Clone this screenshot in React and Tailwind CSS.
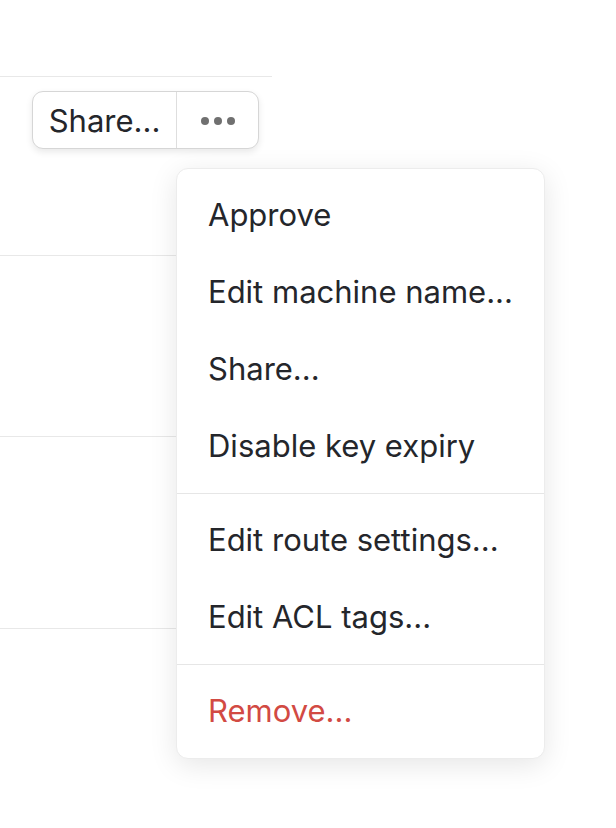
import React from 'react';

const groups = [
  ['Approve', 'Edit machine name...', 'Share...', 'Disable key expiry'],
  ['Edit route settings...', 'Edit ACL tags...'],
  ['Remove...'],
];

const App = () => {
  return (
    <main className="relative w-[616px] h-[828px] bg-white text-[#24262b] font-['Inter','Noto_Sans',sans-serif] overflow-hidden">
      {/* Table rows behind the menu */}
      <div className="w-[272px] pt-[76px]">
        <div className="h-[180px] border-t border-b border-[#e8e8e8] pt-[14px] pl-[32px]">
          <div className="inline-flex h-[58px] rounded-[11px] border border-[#d6d6d6] bg-white shadow-[0_3px_7px_rgba(0,0,0,0.09)]">
            <button className="w-[144px] text-[31px] leading-none border-r border-[#dedede]">
              Share...
            </button>
            <button className="w-[81px] flex items-center justify-center gap-[5px] pt-[1px]">
              <span className="block w-[8px] h-[8px] rounded-full bg-[#707070]" />
              <span className="block w-[8px] h-[8px] rounded-full bg-[#707070]" />
              <span className="block w-[8px] h-[8px] rounded-full bg-[#707070]" />
            </button>
          </div>
        </div>
        <div className="h-[181px] border-b border-[#e8e8e8]" />
        <div className="h-[192px] border-b border-[#e8e8e8]" />
      </div>

      {/* Dropdown menu */}
      <div className="absolute left-[176px] top-[168px] w-[369px] rounded-[12px] border border-[#ececec] bg-white shadow-[0_6px_28px_rgba(0,0,0,0.10)]">
        {groups.map((items, i) => (
          <div key={i} className={i > 0 ? 'border-t border-[#e6e6e6] py-[8px]' : 'py-[8px]'}>
            {items.map((label) => (
              <div
                key={label}
                className={
                  label === 'Remove...'
                    ? 'h-[77px] flex items-center pl-[31px] text-[31px] text-[#d24a43]'
                    : 'h-[77px] flex items-center pl-[31px] text-[31px]'
                }
              >
                {label}
              </div>
            ))}
          </div>
        ))}
      </div>
    </main>
  );
};

export default App;
